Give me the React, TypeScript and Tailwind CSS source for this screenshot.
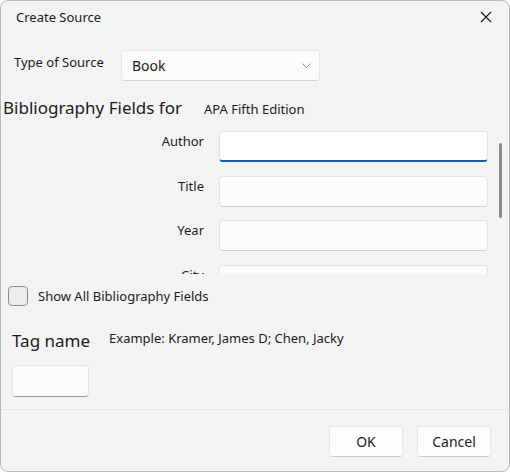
import React from "react";

const font = { fontFamily: '"Noto Sans", "Open Sans", sans-serif' };

function Field({ label, active }: { label: string; active?: boolean }) {
  return (
    <div className="flex items-start h-[31px] shrink-0">
      <div className="w-[203px] text-right text-[13px] leading-[18px] pt-[1px] text-[#1b1b1b]">{label}</div>
      <div
        className={
          "ml-[15px] w-[269px] h-[31px] rounded-[4px] border " +
          (active
            ? "bg-white border-[#e2e2e2] border-b-2 border-b-[#005fb8]"
            : "bg-[#fbfbfb] border-[#e3e3e3] border-b-[#cfcfcf]")
        }
      />
    </div>
  );
}

export default function App() {
  return (
    <div className="w-[510px] h-[473px] bg-white" style={font}>
      <div className="w-[510px] h-[472px] rounded-[8px] border border-[#b9b9b9] bg-[#f3f3f3] flex flex-col overflow-hidden text-[#1b1b1b]">
        {/* title */}
        <div className="flex items-center justify-between h-[33px] shrink-0 pl-[15px] pr-[16px]">
          <span className="text-[13px]">Create Source</span>
          <svg width="12" height="12" viewBox="0 0 12 12" className="mr-[1px] mt-[-2px]">
            <path d="M1 1 L11 11 M11 1 L1 11" stroke="#1b1b1b" strokeWidth="1.1" fill="none" />
          </svg>
        </div>

        {/* type of source */}
        <div className="flex items-center mt-[16px] h-[31px] shrink-0">
          <span className="ml-[13px] w-[107px] text-[13px] -mt-[5px]">Type of Source</span>
          <div className="w-[199px] h-[31px] rounded-[4px] bg-[#fbfbfb] border border-[#e5e5e5] border-b-[#d2d2d2] flex items-center justify-between pl-[10px] pr-[8px]">
            <span className="text-[14px]">Book</span>
            <svg width="9" height="5" viewBox="0 0 9 5">
              <path d="M0.5 0.5 L4.5 4.5 L8.5 0.5" stroke="#8a8a8a" strokeWidth="1" fill="none" />
            </svg>
          </div>
        </div>

        {/* bibliography heading */}
        <div className="flex items-baseline mt-[15px] h-[24px] shrink-0">
          <span className="ml-[2px] text-[17px] leading-[24px]">Bibliography Fields for</span>
          <span className="ml-[22px] text-[13px]">APA Fifth Edition</span>
        </div>

        {/* scroll area */}
        <div className="relative h-[154px] overflow-hidden shrink-0">
          <div className="flex flex-col gap-[13.5px] pt-[11px]">
            <Field label="Author" active />
            <Field label="Title" />
            <Field label="Year" />
            <Field label="City" />
          </div>
          <div className="absolute left-[498px] top-[23px] w-[3px] h-[75px] rounded-full bg-[#8a8a8a]" />
        </div>

        {/* checkbox */}
        <div className="flex items-center mt-[12px] h-[20px] shrink-0">
          <div className="ml-[7px] w-[20px] h-[20px] rounded-[4px] border border-[#8d8d8d] bg-[#ececec]" />
          <span className="ml-[10px] text-[13px] leading-[20px]">Show All Bibliography Fields</span>
        </div>

        {/* tag name */}
        <div className="flex items-start mt-[23px] shrink-0">
          <span className="ml-[11px] text-[17px] leading-[24px]">Tag name</span>
          <span className="ml-[19px] -mt-[1px] text-[13px] leading-[20px]">Example: Kramer, James D; Chen, Jacky</span>
        </div>
        <div className="ml-[11px] mt-[12px] w-[77px] h-[32px] rounded-[4px] bg-[#fbfbfb] border border-[#e3e3e3] border-b-[#9a9a9a] shrink-0" />

        {/* footer */}
        <div className="mt-[12px] border-t border-[#e6e6e6] flex-1 flex items-start justify-end pr-[18px] pt-[16px] gap-[14px]">
          <button className="w-[74px] h-[31px] rounded-[4px] bg-[#fdfdfd] border border-[#e5e5e5] border-b-[#cccccc] text-[14px] text-[#1b1b1b]">
            OK
          </button>
          <button className="w-[74px] h-[31px] rounded-[4px] bg-[#fdfdfd] border border-[#e5e5e5] border-b-[#cccccc] text-[14px] text-[#1b1b1b]">
            Cancel
          </button>
        </div>
      </div>
    </div>
  );
}
